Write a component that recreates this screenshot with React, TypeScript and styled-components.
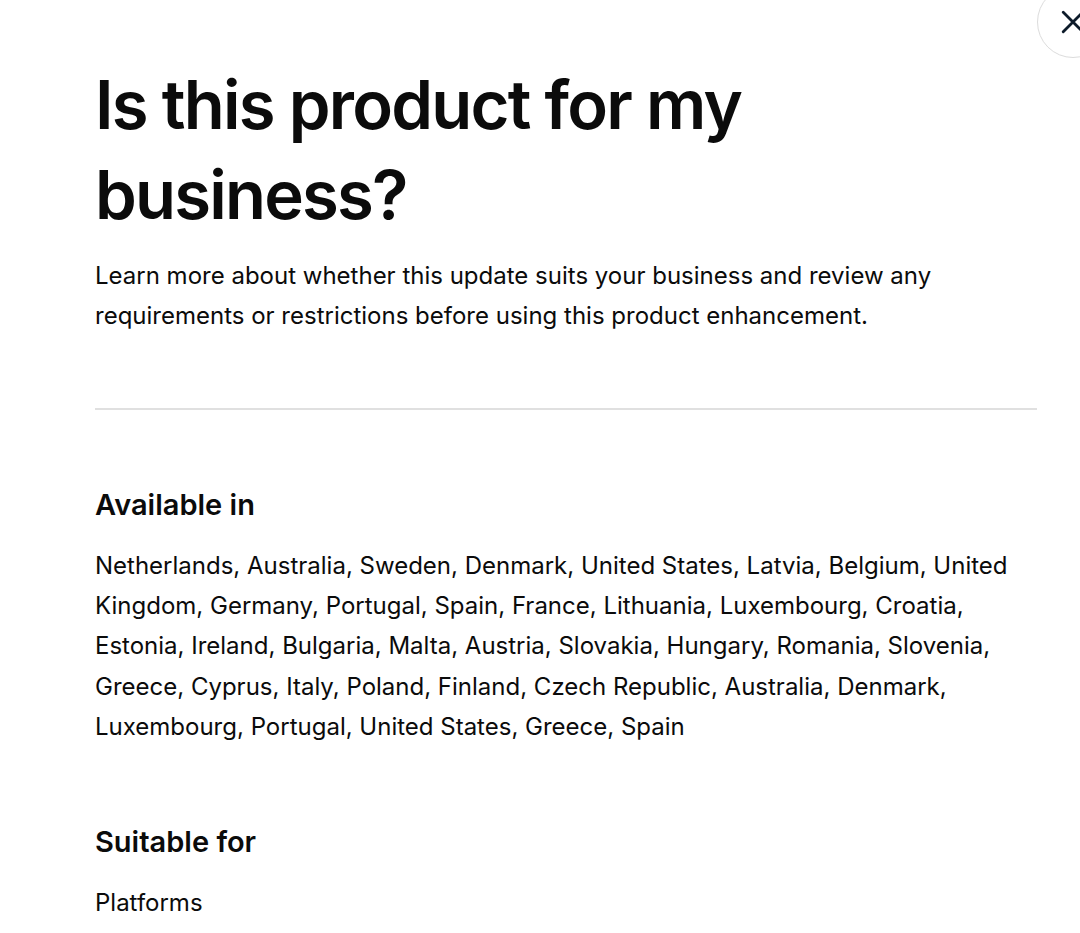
import * as React from 'react'
import styled, { createGlobalStyle } from 'styled-components'

const GlobalStyle = createGlobalStyle`
  html, body {
    margin: 0;
    padding: 0;
    background: #ffffff;
  }
  body {
    font-family: Inter, "Liberation Sans", sans-serif;
    color: #0b0b0b;
    -webkit-font-smoothing: antialiased;
  }
`

const countries = [
  'Netherlands', 'Australia', 'Sweden', 'Denmark', 'United States', 'Latvia', 'Belgium',
  'United Kingdom', 'Germany', 'Portugal', 'Spain', 'France', 'Lithuania', 'Luxembourg',
  'Croatia', 'Estonia', 'Ireland', 'Bulgaria', 'Malta', 'Austria', 'Slovakia', 'Hungary',
  'Romania', 'Slovenia', 'Greece', 'Cyprus', 'Italy', 'Poland', 'Finland', 'Czech Republic',
  'Australia', 'Denmark', 'Luxembourg', 'Portugal', 'United States', 'Greece', 'Spain',
]

export default function App() {
  return (
    <Page>
      <GlobalStyle />
      <CloseButton aria-label="Close">
        <svg width="26" height="26" viewBox="0 0 24 24" fill="none">
          <path d="M3 3 L21 21 M21 3 L3 21" stroke="#0d1b2a" strokeWidth="2.6" strokeLinecap="round" />
        </svg>
      </CloseButton>
      <Content>
        <Title>Is this product for my business?</Title>
        <Intro>
          Learn more about whether this update suits your business and review any
          requirements or restrictions before using this product enhancement.
        </Intro>
        <Divider />
        <Section>
          <SectionTitle>Available in</SectionTitle>
          <Body>{countries.join(', ')}</Body>
        </Section>
        <Section>
          <SectionTitle>Suitable for</SectionTitle>
          <Body>Platforms</Body>
        </Section>
      </Content>
    </Page>
  )
}

const Page = styled.div`
  position: relative;
  width: 1080px;
  height: 933px;
  overflow: hidden;
  background: #fff;
`

const CloseButton = styled.button`
  position: absolute;
  top: -14px;
  left: 1037px;
  width: 72px;
  height: 72px;
  border-radius: 50%;
  border: 1.5px solid #dcdcdc;
  background: #fff;
  display: flex;
  align-items: center;
  justify-content: center;
  padding: 0;
  cursor: pointer;
`

const Content = styled.div`
  display: flex;
  flex-direction: column;
  padding: 60px 43px 0 95px;
`

const Title = styled.h1`
  margin: 0;
  max-width: 700px;
  font-size: 67px;
  line-height: 90px;
  font-weight: 600;
  letter-spacing: -1.8px;
`

const Intro = styled.p`
  margin: 16px 0 0;
  font-size: 24px;
  line-height: 40px;
  font-weight: 400;
  max-width: 870px;
`

const Divider = styled.hr`
  margin: 72px 0 0;
  border: none;
  height: 2px;
  background: #e0e0e0;
`

const Section = styled.section`
  display: flex;
  flex-direction: column;
  gap: 23px;
  margin-top: 77px;
`

const SectionTitle = styled.h2`
  margin: 0;
  font-size: 29px;
  line-height: 36px;
  font-weight: 600;
`

const Body = styled.p`
  margin: 0;
  font-size: 24px;
  line-height: 40.2px;
  font-weight: 400;
`
